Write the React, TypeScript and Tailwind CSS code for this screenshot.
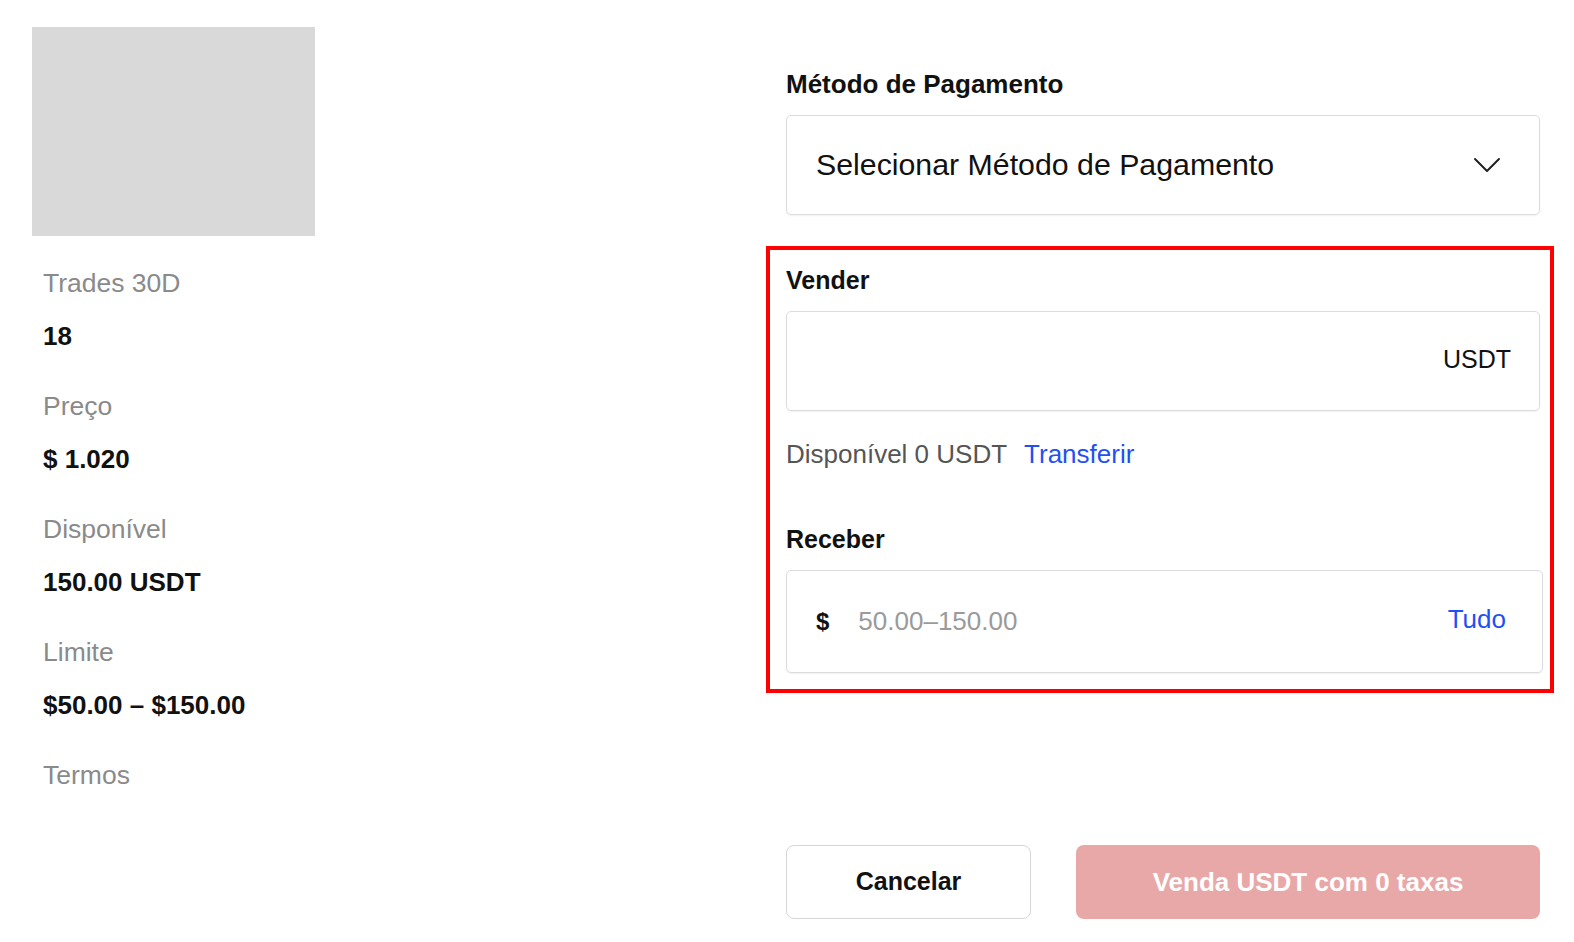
const stats = [
  { label: "Trades 30D", value: "18" },
  { label: "Preço", value: "$ 1.020" },
  { label: "Disponível", value: "150.00 USDT" },
  { label: "Limite", value: "$50.00 – $150.00" },
  { label: "Termos" },
];

const ChevronDown = () => (
  <svg width="28" height="16" viewBox="0 0 28 16" fill="none">
    <path
      d="M2 2l12 12L26 2"
      stroke="#222"
      strokeWidth="2"
      strokeLinecap="round"
      strokeLinejoin="round"
    />
  </svg>
);

export default function App() {
  return (
    <main className="grid min-h-[942px] w-full grid-cols-[754px_757px] bg-white pl-[32px] font-['Liberation_Sans',Arial,sans-serif] text-[#111]">
      {/* seller info */}
      <aside className="pt-[27px]">
        <div className="h-[209px] w-[283px] bg-[#d9d9d9]" />
        <dl className="mt-[32px] flex flex-col gap-[40px] pl-[11px]">
          {stats.map((s) => (
            <div key={s.label}>
              <dt className="text-[26.5px] leading-[30px] text-[#8a8a8a]">
                {s.label}
              </dt>
              {s.value && (
                <dd className="mt-[23px] text-[26px] leading-[30px] font-bold">
                  {s.value}
                </dd>
              )}
            </div>
          ))}
        </dl>
      </aside>

      {/* order form */}
      <section className="pt-[69px]">
        <h3 className="text-[26px] leading-[30px] font-bold">
          Método de Pagamento
        </h3>
        <button className="mt-4 flex h-[100px] w-[754px] cursor-pointer items-center justify-between rounded-[5px] border border-[#dcdcdc] pr-[38px] pl-[29px] shadow-[0_1px_2px_rgba(0,0,0,0.06)]">
          <span className="text-[30.3px]">Selecionar Método de Pagamento</span>
          <ChevronDown />
        </button>

        <div className="relative mt-[50px] w-[757px]">
          <h3 className="text-[25px] leading-[30px] font-bold">Vender</h3>
          <div className="mt-4 flex h-[100px] w-[754px] items-center justify-end rounded-[5px] border border-[#dcdcdc] pr-[28px] pb-[3px] shadow-[0_1px_2px_rgba(0,0,0,0.06)]">
            <span className="text-[25px]">USDT</span>
          </div>
          <p className="mt-[28px] text-[26px] leading-[30px] text-[#555]">
            Disponível 0 USDT
            <span className="ml-[17px] cursor-pointer text-[#1f50f4]">
              Transferir
            </span>
          </p>

          <h3 className="mt-[55px] text-[25px] leading-[30px] font-bold">
            Receber
          </h3>
          <div className="mt-4 flex h-[103px] w-[757px] items-center rounded-[5px] border border-[#dcdcdc] pr-[36px] pl-[29px] shadow-[0_1px_2px_rgba(0,0,0,0.06)]">
            <span className="text-[24px] font-bold">$</span>
            <span className="ml-[29px] text-[26px] text-[#9a9a9a]">
              50.00–150.00
            </span>
            <span className="ml-auto mb-[5px] cursor-pointer text-[26px] text-[#1f50f4]">
              Tudo
            </span>
          </div>

          <span className="pointer-events-none absolute -top-[19px] -right-[11px] -bottom-[20px] -left-[20px] border-4 border-[#ff0000]" />
        </div>

        <div className="mt-[172px] flex gap-[45px]">
          <button className="h-[74px] w-[245px] cursor-pointer rounded-lg border border-[#d6d6d6] text-[25px] font-bold">
            Cancelar
          </button>
          <button className="h-[74px] w-[464px] cursor-pointer rounded-lg bg-[#e8a8a8] text-[26px] font-bold text-white">
            Venda USDT com 0 taxas
          </button>
        </div>
      </section>
    </main>
  );
}
